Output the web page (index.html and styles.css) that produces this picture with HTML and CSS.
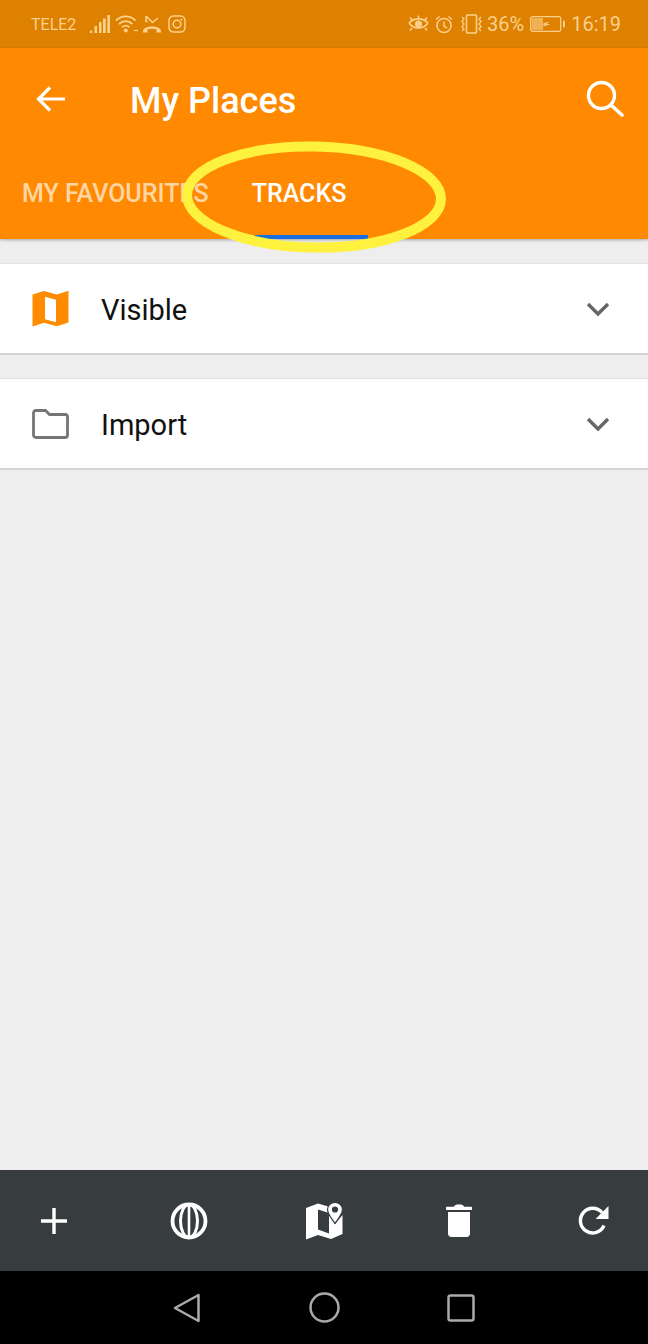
FILE: index.html
```html
<!DOCTYPE html>
<html lang="en">
<head>
    <meta charset="UTF-8">
    <meta name="viewport" content="width=device-width, initial-scale=1.0">
    <title>My Places</title>
    <link rel="stylesheet" href="styles.css">
</head>
<body>
    <div class="phone">
        <div class="status">
            <div class="status-side">
                <span class="carrier">TELE2</span>
                <svg class="signal" width="20" height="20" viewBox="0 0 20 20"><path d="M0 16.500h2.200v2.500H0zM4.500 12h2.500v7H4.500zM9 8h2.500v11H9zM13 4.500h2.700V19H13zM17.300 1H20v18h-2.700z" fill="currentColor"/></svg>
                <svg class="wifi" width="24" height="20" viewBox="0 0 24 20"><g fill="none" stroke="currentColor" stroke-width="1.800"><path d="M1 6.500C6.500 1 15 1 20.500 6.500"/><path d="M4 10c4-3.800 9.500-3.800 13.500 0"/><path d="M7 13.200c2.300-2 5.200-2 7.500 0"/></g><circle cx="10.800" cy="16.500" r="2" fill="currentColor"/><path d="M19 16.500h4" stroke="currentColor" stroke-width="1.300"/></svg>
                <svg class="missed" width="20" height="20" viewBox="0 0 20 20"><path d="M4 2v5.500h1.500M4 2l6.500 6.500L16 4" fill="none" stroke="currentColor" stroke-width="1.600"/><path d="M1 17c0-6 18-6 18 0v1.500h-4.500V15.500c-2.800-1-6.200-1-9 0v3H1z" fill="currentColor"/></svg>
                <svg class="insta" width="18" height="18" viewBox="0 0 18 18"><rect x="1" y="1" width="16" height="16" rx="4.500" fill="none" stroke="currentColor" stroke-width="1.500"/><circle cx="9" cy="9" r="3.800" fill="none" stroke="currentColor" stroke-width="1.500"/><circle cx="13.500" cy="4.500" r="1" fill="currentColor"/></svg>
            </div>
            <div class="status-side">
                <svg class="eye" width="21" height="18" viewBox="0 0 21 18"><path d="M1 8c5 6.500 14 6.500 19 0M1 8c5-5.500 14-5.500 19 0" fill="none" stroke="currentColor" stroke-width="1.700"/><circle cx="10.500" cy="9" r="3.500" fill="currentColor"/><path d="M4 5L2 2.500M10.500 3V.5M17 5l2-2.500M4 13l-2 2.500M17 13l2 2.500" stroke="currentColor" stroke-width="1.500"/></svg>
                <svg class="alarm" width="18" height="19" viewBox="0 0 18 19"><circle cx="9" cy="10.500" r="7" fill="none" stroke="currentColor" stroke-width="1.500"/><path d="M9 6.500v4.500l3 2.200M1 4.500L4.500 1.500M17 4.500L13.500 1.500" fill="none" stroke="currentColor" stroke-width="1.500"/></svg>
                <svg class="vibrate" width="25" height="20" viewBox="0 0 25 20"><rect x="7.500" y="1" width="10" height="18" rx="1" fill="none" stroke="currentColor" stroke-width="1.600"/><path d="M3 3l2 2-2 2.500 2 2.500-2 2.500 2 2.500-2 2M22 3l-2 2 2 2.500-2 2.500 2 2.500-2 2.500 2 2" fill="none" stroke="currentColor" stroke-width="1.300"/></svg>
                <span class="battery-pct">36%</span>
                <svg class="battery" width="35" height="16" viewBox="0 0 35 16"><rect x=".7" y=".7" width="30" height="14.600" rx="2" fill="none" stroke="currentColor" stroke-width="1.300"/><rect x="2" y="2" width="11" height="12" fill="currentColor" opacity=".6"/><path d="M11 8.500l8-3-2.500 2.500h4l-8 3 2.500-2.500z" fill="currentColor"/><rect x="33" y="4.500" width="2" height="7" rx="1" fill="currentColor"/></svg>
                <span class="clock">16:19</span>
            </div>
        </div>

        <header class="appbar">
            <div class="toolbar">
                <svg class="back" width="30" height="28" viewBox="0 0 30 28"><path d="M29 14H3M14 2.500L2.500 14 14 25.500" fill="none" stroke="#fff" stroke-width="3.200"/></svg>
                <h1>My Places</h1>
                <svg class="search" width="38" height="38" viewBox="0 0 38 38"><circle cx="15.500" cy="15.500" r="13" fill="none" stroke="#fff" stroke-width="3.400"/><path d="M25 25l11 10" stroke="#fff" stroke-width="3.600" stroke-linecap="round"/></svg>
            </div>
            <nav class="tabs">
                <span class="tab">MY FAVOURITES</span>
                <span class="tab tab-active">TRACKS</span>
            </nav>
        </header>

        <main class="content">
            <section class="row">
                <svg class="row-icon" width="37" height="37" viewBox="0 0 37 37"><path fill-rule="evenodd" d="M.5 4.500L12 1l13 3.500L36.500.8v31.700L25 36.200l-13-3.500L.5 36.500zM13 6.800v22.500l11 3V9.700z" fill="#ff8c00"/></svg>
                <span class="row-label">Visible</span>
                <svg class="chevron" width="24" height="14" viewBox="0 0 24 14"><path d="M2 2l10 10L22 2" fill="none" stroke="#666" stroke-width="3.400"/></svg>
            </section>
            <section class="row">
                <svg class="row-icon" width="37" height="30" viewBox="0 0 37 30"><path d="M1.500 4C1.500 2.500 2.500 1.500 4 1.500h9.500l4 4H33c1.500 0 2.500 1 2.500 2.500v18c0 1.500-1 2.500-2.500 2.500H4c-1.500 0-2.500-1-2.500-2.500z" fill="none" stroke="#757575" stroke-width="2.800"/></svg>
                <span class="row-label">Import</span>
                <svg class="chevron" width="24" height="14" viewBox="0 0 24 14"><path d="M2 2l10 10L22 2" fill="none" stroke="#666" stroke-width="3.400"/></svg>
            </section>
        </main>

        <div class="actions">
            <svg width="28" height="28" viewBox="0 0 28 28"><path d="M14 1v26M1 14h26" stroke="#fff" stroke-width="3.400"/></svg>
            <svg width="38" height="38" viewBox="0 0 38 38"><g fill="none" stroke="#fff"><circle cx="19" cy="19" r="16.500" stroke-width="3.800"/><ellipse cx="19" cy="19" rx="8.500" ry="16.500" stroke-width="3"/><path d="M19 2v34" stroke-width="2.600"/></g></svg>
            <svg width="38" height="38" viewBox="0 0 38 38"><path d="M1 6l12-4.500L25 5v7c0 3 2 6 5 10l7.500-9V32L26 37l-13-4L1 37.500zM13 7.500v20l11 4V11z" fill="#fff" fill-rule="evenodd"/><path fill-rule="evenodd" d="M30 .5c4.400 0 7.500 3 7.500 7 0 4-3.500 8.500-7.500 14-4-5.500-7.500-10-7.500-14 0-4 3.100-7 7.500-7zm0 4.500a2.500 2.500 0 100 5 2.500 2.500 0 000-5z" fill="#fff" stroke="#373c3e" stroke-width="1.200"/></svg>
            <svg width="26" height="33" viewBox="0 0 26 33"><path d="M.8 2.800h7C8.500 1 10 .5 13 .5s4.500.5 5.200 2.300h7c.5 0 .8.300.8.800v1.600c0 .5-.3.800-.8.800H.8c-.5 0-.8-.3-.8-.8V3.600c0-.5.300-.8.800-.8z" fill="#fff"/><path d="M2 8h22v21.500c0 2.200-1.300 3.500-3.500 3.500h-15C3.300 33 2 31.700 2 29.500z" fill="#fff"/></svg>
            <svg width="32" height="32" viewBox="0 0 32 32"><path d="M26 20.500A12.300 12.300 0 1 1 24 7.500" fill="none" stroke="#fff" stroke-width="3.400"/><path d="M30.500 1v13h-13z" fill="#fff"/></svg>
        </div>

        <footer class="sysnav">
            <svg width="28" height="30" viewBox="0 0 28 30"><path d="M25.500 2L2 15l23.500 13z" fill="none" stroke="#aaa" stroke-width="2.500" stroke-linejoin="round"/></svg>
            <svg width="31" height="31" viewBox="0 0 31 31"><circle cx="15.500" cy="15.500" r="14" fill="none" stroke="#aaa" stroke-width="2.500"/></svg>
            <svg width="28" height="28" viewBox="0 0 28 28"><rect x="1.500" y="1.500" width="25" height="25" rx="2" fill="none" stroke="#aaa" stroke-width="2.500"/></svg>
        </footer>

        <!-- hand drawn marker ring around the tracks tab -->
        <svg class="marker" width="270" height="116" viewBox="0 0 270 116"><ellipse cx="135" cy="58" rx="127" ry="50.500" fill="none" stroke="#fff23e" stroke-width="10" transform="rotate(1 135 58)"/></svg>
    </div>
</body>
</html>
```

FILE: styles.css
```css
* {
    margin: 0;
    padding: 0;
    box-sizing: border-box;
    font-family: Roboto, "Noto Sans", sans-serif;
}

body {
    background: #eee;
}

.phone {
    position: relative;
    width: 648px;
    height: 1344px;
    display: flex;
    flex-direction: column;
    overflow: hidden;
}

.status {
    height: 48px;
    padding: 0 27px 0 31px;
    display: flex;
    justify-content: space-between;
    align-items: center;
    background-color: #de8100;
    color: #fbd08c;
}

.status-side {
    display: flex;
    align-items: center;
}

.carrier {
    font-size: 16px;
    margin-right: 14px;
}

.wifi {
    margin-left: 5px;
}

.missed {
    margin-left: 3px;
}

.insta {
    margin-left: 6px;
}

.alarm {
    margin-left: 6px;
}

.vibrate {
    margin-left: 6px;
}

.battery-pct {
    font-size: 20px;
    margin-left: 3px;
}

.battery {
    margin-left: 6px;
}

.clock {
    font-size: 20px;
    margin-left: 6px;
}

.appbar {
    height: 191px;
    background-color: #ff8900;
    box-shadow: 0 1px 3px rgba(0, 0, 0, .3);
    position: relative;
}

.toolbar {
    height: 102px;
    padding: 0 24px 0 36px;
    display: flex;
    align-items: center;
}

h1 {
    font-size: 36px;
    font-weight: 500;
    line-height: 46px;
    padding-top: 4px;
    color: #fff;
    margin-left: 64px;
    flex: 1;
}

.tabs {
    display: flex;
    padding-left: 22px;
    font-size: 25px;
    font-weight: 500;
    height: 89px;
}

.tab {
    color: #ffd6a3;
    height: 89px;
    padding-top: 29px;
    white-space: nowrap;
}

.tab-active {
    color: #fff;
    margin-left: 43px;
    position: relative;
}

/* selected tab underline */
.tab-active::after {
    content: "";
    position: absolute;
    left: 3px;
    right: -22px;
    bottom: 0;
    height: 4px;
    background-color: #1a6fe0;
}

.content {
    flex: 1;
    padding-top: 24px;
    background-color: #eee;
}

.row {
    height: 92px;
    margin-bottom: 23px;
    padding: 0 38px 0 32px;
    display: flex;
    align-items: center;
    background-color: #fff;
    border-top: 1px solid #e2e2e2;
    border-bottom: 2px solid #d4d4d4;
}

.row-label {
    flex: 1;
    margin-left: 32px;
    padding-top: 2px;
    font-size: 29px;
    color: #111;
}

.actions {
    height: 101px;
    margin: 0 -13.500px;
    display: grid;
    grid-template-columns: repeat(5, 1fr);
    justify-items: center;
    align-items: center;
    background-color: #373c3e;
}

.sysnav {
    height: 73px;
    padding: 0 173px;
    display: flex;
    justify-content: space-between;
    align-items: center;
    background-color: #000;
}

.marker {
    position: absolute;
    left: 179px;
    top: 139px;
}
```
